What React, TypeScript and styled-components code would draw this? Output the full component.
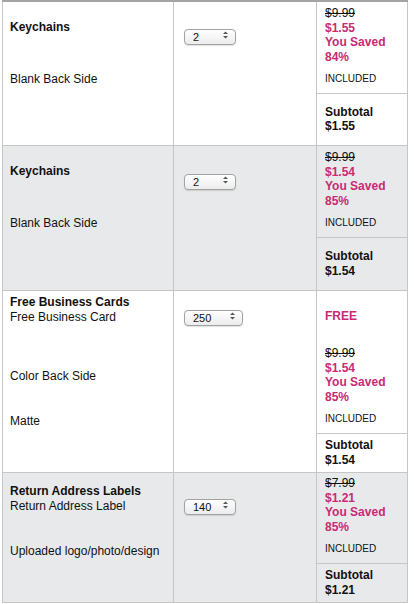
import React from 'react';
import styled, { createGlobalStyle } from 'styled-components';

const GlobalStyle = createGlobalStyle`
  body {
    margin: 0;
    background: #fff;
    font-family: "Liberation Sans", Arial, sans-serif;
    color: #111;
  }
`;

const Table = styled.div`
  margin-left: 2px;
  width: 406px;
  border-top: 2px solid #a4a4a4;
`;

const ProductRow = styled.div<{ $height: number; $shaded?: boolean }>`
  display: grid;
  grid-template-columns: 170px 142px 90px;
  column-gap: 1px;
  height: ${(p) => p.$height}px;
  padding: 0 1px;
  background: #c6c6c6;
  border-bottom: 1px solid #c6c6c6;

  > * {
    background: ${(p) => (p.$shaded ? '#e8e9eb' : '#fff')};
  }
`;

const OptionCol = styled.div<{ $top: number }>`
  display: flex;
  flex-direction: column;
  padding: ${(p) => p.$top}px 7px 0;
  font-size: 12px;
  line-height: 14.5px;
`;

const Heading = styled.div`
  font-weight: bold;
`;

const OptionLabel = styled.div<{ $gap?: number }>`
  margin-top: ${(p) => p.$gap ?? 0}px;
`;

const QtyCell = styled.div<{ $top: number }>`
  padding: ${(p) => p.$top}px 0 0 10px;
`;

const SelectWrap = styled.div<{ $width: number }>`
  position: relative;
  width: ${(p) => p.$width}px;
  height: 16px;
`;

const QtySelect = styled.select`
  appearance: none;
  box-sizing: border-box;
  width: 100%;
  height: 100%;
  margin: 0;
  padding: 0 0 0 8px;
  border: 1px solid #a2a2a2;
  border-radius: 4px;
  background: linear-gradient(#ffffff, #ececec);
  box-shadow: 0 1px 1px rgba(0, 0, 0, 0.12);
  font-family: "Liberation Sans", Arial, sans-serif;
  font-size: 11px;
  line-height: 14px;
  color: #111;
`;

const Arrows = styled.svg`
  position: absolute;
  right: 8px;
  top: 4px;
  pointer-events: none;
`;

const PriceCol = styled.div<{ $top: number }>`
  display: flex;
  flex-direction: column;
  padding-top: ${(p) => p.$top}px;
  font-size: 12px;
  line-height: 14.5px;
`;

const PriceBlock = styled.div<{ $gap?: number }>`
  margin-top: ${(p) => p.$gap ?? 0}px;
  padding: 0 8px;
`;

const Was = styled.div`
  text-decoration: line-through;
`;

const Pink = styled.div`
  color: #c92a72;
  font-weight: bold;
`;

const Included = styled.div`
  margin-top: 8px;
  padding: 0 8px;
  font-size: 10px;
`;

const Subtotal = styled.div`
  flex: 1;
  display: flex;
  flex-direction: column;
  justify-content: center;
  margin-top: 6px;
  padding: 0 8px;
  border-top: 1px solid #c6c6c6;
  font-weight: bold;
`;

type Line = { text: string; bold?: boolean; gap?: number };

type Product = {
  height: number;
  shaded: boolean;
  leftTop: number;
  lines: Line[];
  qty: { value: string; top: number; width: number };
  priceTop: number;
  freeGap?: number;
  priceGap?: number;
  was: string;
  now: string;
  saved: string;
};

const products: Product[] = [
  {
    height: 143,
    shaded: false,
    leftTop: 18,
    lines: [
      { text: 'Keychains', bold: true },
      { text: 'Blank Back Side', gap: 37 },
    ],
    qty: { value: '2', top: 25, width: 52 },
    priceTop: 4,
    was: '$9.99',
    now: '$1.55',
    saved: '84%',
  },
  {
    height: 144,
    shaded: true,
    leftTop: 18,
    lines: [
      { text: 'Keychains', bold: true },
      { text: 'Blank Back Side', gap: 37 },
    ],
    qty: { value: '2', top: 26, width: 52 },
    priceTop: 4,
    was: '$9.99',
    now: '$1.54',
    saved: '85%',
  },
  {
    height: 181,
    shaded: false,
    leftTop: 4,
    lines: [
      { text: 'Free Business Cards', bold: true },
      { text: 'Free Business Card' },
      { text: 'Color Back Side', gap: 44.5 },
      { text: 'Matte', gap: 30.5 },
    ],
    qty: { value: '250', top: 17, width: 59 },
    priceTop: 4,
    freeGap: 14,
    priceGap: 22.5,
    was: '$9.99',
    now: '$1.54',
    saved: '85%',
  },
  {
    height: 129,
    shaded: true,
    leftTop: 11,
    lines: [
      { text: 'Return Address Labels', bold: true },
      { text: 'Return Address Label' },
      { text: 'Uploaded logo/photo/design', gap: 30.5 },
    ],
    qty: { value: '140', top: 24, width: 52 },
    priceTop: 3,
    was: '$7.99',
    now: '$1.21',
    saved: '85%',
  },
];

const Qty = ({ value, width }: { value: string; width: number }) => (
  <SelectWrap $width={width}>
    <QtySelect defaultValue={value}>
      <option value={value}>{value}</option>
    </QtySelect>
    <Arrows width="5" height="8" viewBox="0 0 5 8">
      <polygon points="0,3 2.5,0.5 5,3" fill="#555" />
      <polygon points="0,5 2.5,7.5 5,5" fill="#555" />
    </Arrows>
  </SelectWrap>
);

export default function App() {
  return (
    <>
      <GlobalStyle />
      <Table>
        {products.map((p, i) => (
          <ProductRow key={i} $height={p.height} $shaded={p.shaded}>
            <OptionCol $top={p.leftTop}>
              {p.lines.map((l, j) =>
                l.bold ? (
                  <Heading key={j}>{l.text}</Heading>
                ) : (
                  <OptionLabel key={j} $gap={l.gap}>
                    {l.text}
                  </OptionLabel>
                )
              )}
            </OptionCol>
            <QtyCell $top={p.qty.top}>
              <Qty value={p.qty.value} width={p.qty.width} />
            </QtyCell>
            <PriceCol $top={p.priceTop}>
              {p.freeGap !== undefined && (
                <PriceBlock $gap={p.freeGap}>
                  <Pink>FREE</Pink>
                </PriceBlock>
              )}
              <PriceBlock $gap={p.priceGap}>
                <Was>{p.was}</Was>
                <Pink>{p.now}</Pink>
                <Pink>You Saved</Pink>
                <Pink>{p.saved}</Pink>
              </PriceBlock>
              <Included>INCLUDED</Included>
              <Subtotal>
                <div>Subtotal</div>
                <div>{p.now}</div>
              </Subtotal>
            </PriceCol>
          </ProductRow>
        ))}
      </Table>
    </>
  );
}
